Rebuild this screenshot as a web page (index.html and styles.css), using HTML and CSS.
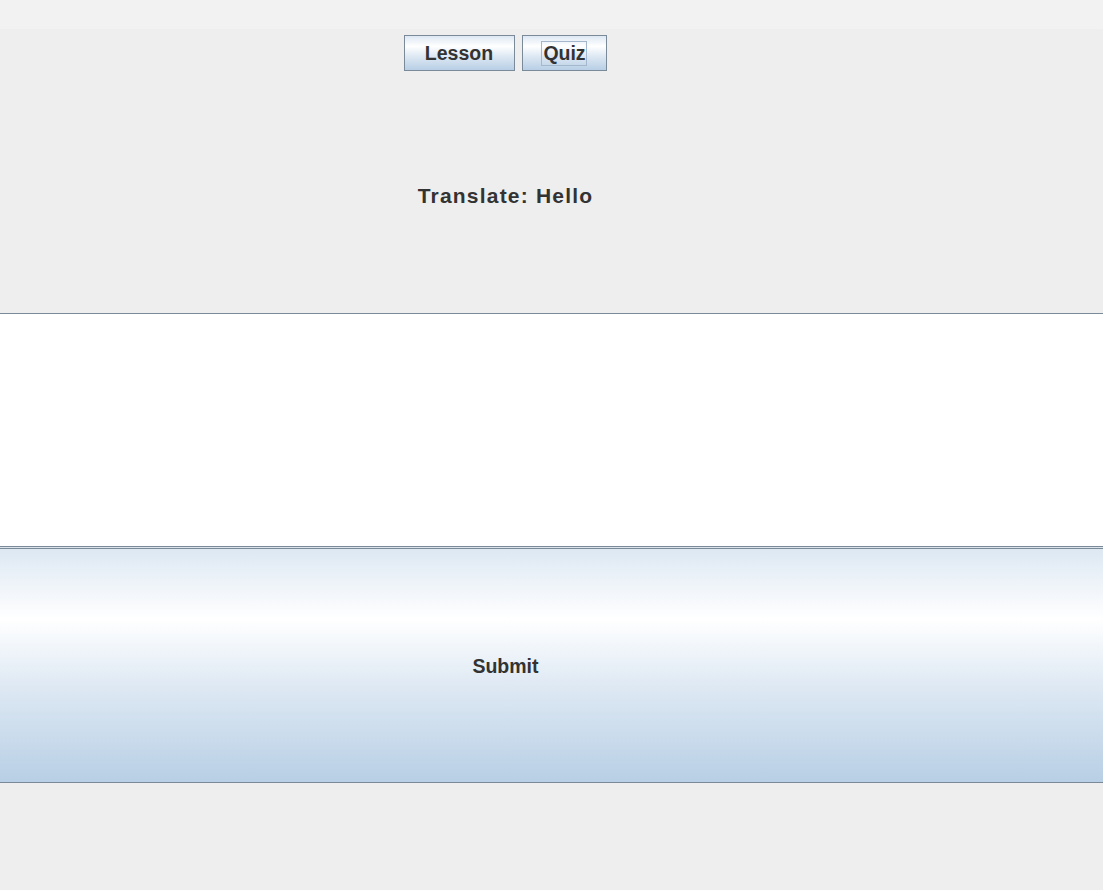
FILE: index.html
```html
<!DOCTYPE html>
<html>
<head>
<meta charset="utf-8">
<link rel="stylesheet" href="styles.css">
</head>
<body>
<div class="titlebar"></div>
<div class="top">
  <div class="inner">
    <div class="nav">
      <button class="btn lesson">Lesson</button>
      <button class="btn quiz"><span class="focus">Quiz</span></button>
    </div>
    <div class="prompt">Translate: Hello</div>
  </div>
</div>
<div class="field"></div>
<div class="gapline"></div>
<div class="submit">
  <div class="inner submit-inner">Submit</div>
</div>
<div class="bottom"></div>
</body>
</html>
```

FILE: styles.css
```css
html, body {
  margin: 0;
  padding: 0;
  background: #eeeeee;
  font-family: "Liberation Sans", Arial, sans-serif;
  color: #333333;
}
.titlebar {
  height: 29px;
  background: #f2f2f2;
}
.top {
  height: 284px;
  background: #eeeeee;
}
.inner {
  width: 1011px;
}
.nav {
  display: flex;
  justify-content: center;
  gap: 7px;
  padding-top: 6px;
  padding-right: 1px;
}
.btn {
  box-sizing: border-box;
  height: 36px;
  border: 1px solid #7a8a99;
  background: linear-gradient(to bottom, #dde8f3 0%, #ffffff 30%, #dde8f3 60%, #b8cfe5 100%);
  font-family: "Liberation Sans", Arial, sans-serif;
  font-weight: bold;
  font-size: 19.5px;
  color: #333333;
  padding: 0;
  margin: 0;
  display: flex;
  align-items: center;
  justify-content: center;
}
.lesson {
  width: 111px;
}
.quiz {
  width: 85px;
}
.focus {
  border: 1px solid #a3b8cc;
  padding: 1px 0 2px 1px;
  line-height: 20px;
}
.prompt {
  text-align: center;
  font-weight: bold;
  font-size: 21px;
  letter-spacing: 1.2px;
  padding-top: 113px;
  line-height: 24px;
}
.field {
  box-sizing: border-box;
  height: 234px;
  background: #ffffff;
  border-top: 1px solid #7a8a99;
  border-bottom: 1px solid #7a8a99;
}
.gapline {
  height: 1px;
  background: #dde3ea;
}
.submit {
  box-sizing: border-box;
  height: 235px;
  border-top: 1px solid #7a8a99;
  border-bottom: 1px solid #7a8a99;
  background: linear-gradient(to bottom, #dde8f3 0%, #ffffff 30%, #dde8f3 60%, #b8cfe5 100%);
}
.submit-inner {
  height: 100%;
  display: flex;
  align-items: center;
  justify-content: center;
  font-weight: bold;
  font-size: 19.5px;
  padding-top: 2px;
  box-sizing: border-box;
}
.bottom {
  height: 108px;
  background: #eeeeee;
}
```
